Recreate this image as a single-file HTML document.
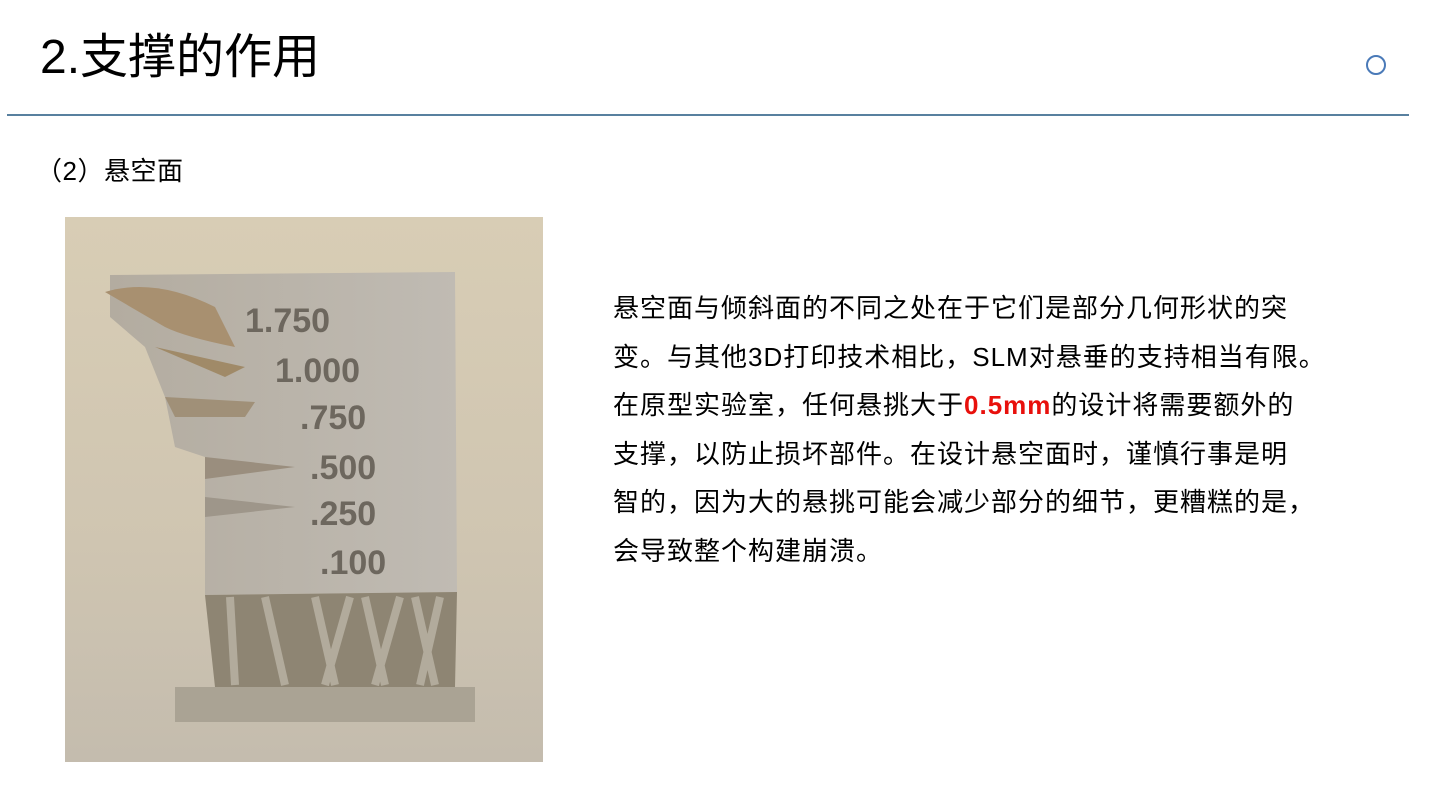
<!DOCTYPE html>
<html><head><meta charset="utf-8"><style>
body{margin:0;width:1440px;height:810px;background:#fff;position:relative;overflow:hidden;font-family:"Liberation Sans","Noto Sans CJK SC",sans-serif;color:#000}
.t{position:absolute;left:40px;top:27px;font-size:48px;line-height:62px}
.line{position:absolute;left:7px;top:114px;width:1402px;height:2px;background:#58809f}
.c{position:absolute;left:1366px;top:55px;width:16px;height:16px;border:2.5px solid #4a7ab8;border-radius:50%}
.s{position:absolute;left:36px;top:154px;font-size:26px;line-height:34px;letter-spacing:0.5px}
.p{position:absolute;left:613px;top:284px;width:760px;font-size:26px;line-height:48.5px;letter-spacing:1px}
.r{color:#e8100c;font-weight:bold}
</style></head><body>
<div class="t">2.支撑的作用</div>
<div class="c"></div>
<div class="line"></div>
<div class="s">（2）悬空面</div>
<svg style="position:absolute;left:65px;top:217px" width="478" height="545" viewBox="0 0 478 545">
<defs><linearGradient id="bg" x1="0" y1="0" x2="0" y2="1"><stop offset="0" stop-color="#d8cdb5"/><stop offset="0.6" stop-color="#cfc5b1"/><stop offset="1" stop-color="#c4bcae"/></linearGradient>
<linearGradient id="blk" x1="0" y1="0" x2="1" y2="0"><stop offset="0" stop-color="#b3aca0"/><stop offset="1" stop-color="#c0bbb3"/></linearGradient></defs>
<rect width="478" height="545" fill="url(#bg)"/>
<path d="M45 58 L390 55 L392 375 L140 378 L140 240 L110 230 L100 180 L80 130 L45 100 Z" fill="url(#blk)"/>
<path d="M40 75 Q90 60 150 90 L170 130 Q120 120 100 110 Z" fill="#a89070"/>
<path d="M90 130 L180 150 L160 160 Z" fill="#a08a68"/>
<path d="M100 180 L190 185 L180 200 L110 200 Z" fill="#a09078"/>
<path d="M140 240 L230 250 L140 262 Z" fill="#9a8e7e"/>
<path d="M140 280 L230 290 L140 300 Z" fill="#9e968a"/>
<path d="M140 378 L392 375 L390 470 L150 470 Z" fill="#8e8573"/>
<g stroke="#b2ab9c" stroke-width="8"><path d="M165 380 L170 468 M200 380 L220 468 M250 380 L270 468 M285 380 L260 468 M300 380 L320 468 M335 380 L310 468 M350 380 L370 468 M375 380 L355 468"/></g>
<rect x="110" y="470" width="300" height="35" fill="#aaa394"/>
<g fill="#6d675e" font-family="Liberation Sans" font-size="34" font-weight="bold"><text x="180" y="115">1.750</text><text x="210" y="165">1.000</text><text x="235" y="212">.750</text><text x="245" y="262">.500</text><text x="245" y="308">.250</text><text x="255" y="357">.100</text></g>
</svg>
<div class="p">悬空面与倾斜面的不同之处在于它们是部分几何形状的突<br>变。与其他3D打印技术相比，SLM对悬垂的支持相当有限。<br>在原型实验室，任何悬挑大于<span class="r">0.5mm</span>的设计将需要额外的<br>支撑，以防止损坏部件。在设计悬空面时，谨慎行事是明<br>智的，因为大的悬挑可能会减少部分的细节，更糟糕的是，<br>会导致整个构建崩溃。</div>
<body>
</html>
